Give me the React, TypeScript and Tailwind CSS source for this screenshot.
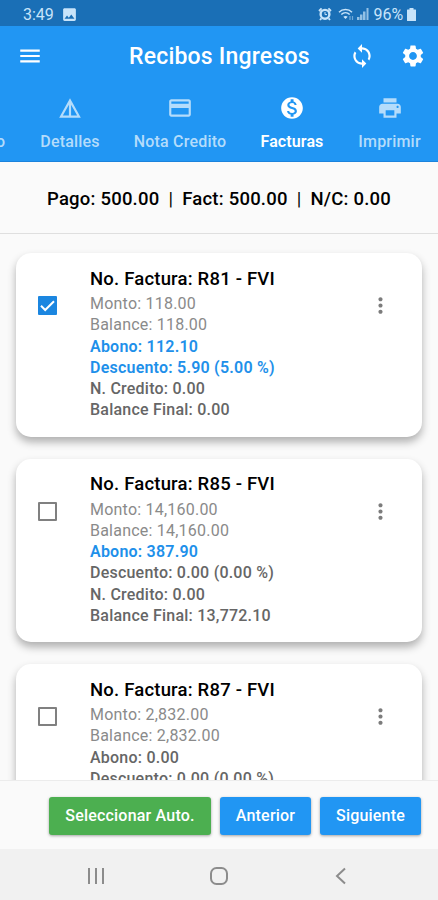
import { useState } from "react";
import type { ReactNode } from "react";
import {
  MdDetails,
  MdImage,
  MdMenu,
  MdMonetizationOn,
  MdMoreVert,
  MdOutlineCreditCard,
  MdPrint,
  MdSettings,
  MdSync,
} from "react-icons/md";

type Factura = {
  id: string;
  monto: string;
  balance: string;
  abono: string;
  descuento: string;
  credito?: string;
  final?: string;
  abonado: boolean;
  conDescuento: boolean;
};

const FACTURAS: Factura[] = [
  {
    id: "R81",
    monto: "118.00",
    balance: "118.00",
    abono: "112.10",
    descuento: "5.90 (5.00 %)",
    credito: "0.00",
    final: "0.00",
    abonado: true,
    conDescuento: true,
  },
  {
    id: "R85",
    monto: "14,160.00",
    balance: "14,160.00",
    abono: "387.90",
    descuento: "0.00 (0.00 %)",
    credito: "0.00",
    final: "13,772.10",
    abonado: true,
    conDescuento: false,
  },
  {
    id: "R87",
    monto: "2,832.00",
    balance: "2,832.00",
    abono: "0.00",
    descuento: "0.00 (0.00 %)",
    abonado: false,
    conDescuento: false,
  },
];

function StatusBar() {
  return (
    <div className="flex h-[26px] shrink-0 items-center bg-[#1a6fb6] pt-[2px] pl-[23px] pr-[22px] text-[#c8e4fa]">
      <span className="pt-[1px] text-[16px] leading-none">3:49</span>
      <MdImage className="ml-[7px] size-[17px]" />
      <div className="ml-auto flex items-center">
        {/* alarma */}
        <svg className="size-[14px]" viewBox="0 0 14 14" fill="none" stroke="currentColor">
          <circle cx="7" cy="7.3" r="4.4" strokeWidth="2.4" />
          <path d="M1 4 3.6 1.4M13 4 10.4 1.4M3.4 11.4 2 13M10.6 11.4 12 13" strokeWidth="1.8" />
          <path d="M7 5v2.6h2" strokeWidth="1" />
        </svg>
        {/* wifi */}
        <svg className="ml-[6px] h-[13px] w-[17px]" viewBox="0 0 17 13" fill="none" stroke="currentColor">
          <path d="M1 4.2C4.5.6 10.5.6 14 4.2" strokeWidth="1.5" />
          <path d="M3.3 6.5c2.4-2.2 6-2.2 8.4 0" strokeWidth="1.5" />
          <path d="M5.3 8.7 7.5 11l2.2-2.3c-1.3-1-3.1-1-4.4 0Z" fill="currentColor" stroke="none" />
          <path d="M12 8v4M14.5 8v4" strokeWidth="1.2" opacity="0.5" />
        </svg>
        {/* cobertura */}
        <svg className="ml-[2px] h-[12px] w-[12px]" viewBox="0 0 12 12" fill="currentColor">
          <path d="M0 9h2.5v3H0zM3 6.5h2.5V12H3zM6 3.5h2.5V12H6zM9.5 0h2v12h-2z" opacity="0.7" />
        </svg>
        <span className="ml-[5px] pt-[1px] text-[16px] leading-none tracking-[-0.1px]">96%</span>
        <svg className="ml-[4px] h-[13px] w-[9px]" viewBox="0 0 9 13" fill="currentColor">
          <path d="M2.5 0h4v1.5h2a.5.5 0 0 1 .5.5v10.5a.5.5 0 0 1-.5.5h-8a.5.5 0 0 1-.5-.5V2a.5.5 0 0 1 .5-.5h2z" />
        </svg>
      </div>
    </div>
  );
}

function AppBar() {
  return (
    <header className="flex h-[60px] shrink-0 items-center bg-[#2196f3] pl-[17px] pr-[12px] text-white">
      <MdMenu className="size-[26px]" />
      <h1 className="ml-[86px] text-[23px] font-medium leading-none tracking-[0.2px] whitespace-nowrap">
        Recibos Ingresos
      </h1>
      <MdSync className="ml-auto size-[26px]" />
      <MdSettings className="ml-[25px] size-[26px]" />
    </header>
  );
}

function Tab({ icon, label, className, active }: { icon: ReactNode; label: string; className: string; active?: boolean }) {
  return (
    <div
      className={`flex shrink-0 flex-col items-center pt-[9px] text-[26px] ${className} ${
        active ? "text-white" : "text-[#b4dcfb]"
      }`}
    >
      {icon}
      <span
        className={`mt-[12px] text-[16px] leading-[18px] whitespace-nowrap ${
          active ? "font-semibold tracking-[0.1px]" : "font-medium tracking-[0.2px]"
        }`}
      >
        {label}
      </span>
    </div>
  );
}

function Tabs() {
  return (
    <nav className="flex h-[76px] shrink-0 overflow-hidden border-b border-[#1b83dc] bg-[#2196f3]">
      <div className="flex w-[23px] shrink-0 items-start pt-[47px] text-[16px] font-medium leading-[18px] text-[#b4dcfb]">
        <span className="-ml-[4px]">o</span>
      </div>
      <Tab icon={<MdDetails />} label="Detalles" className="w-[94px]" />
      <Tab icon={<MdOutlineCreditCard />} label="Nota Credito" className="w-[126px]" />
      <Tab icon={<MdMonetizationOn />} label="Facturas" className="w-[98px]" active />
      <Tab icon={<MdPrint />} label="Imprimir" className="w-[97px]" />
    </nav>
  );
}

function Check({ checked, onClick }: { checked: boolean; onClick: () => void }) {
  return (
    <button
      onClick={onClick}
      aria-label="Seleccionar factura"
      className={`mt-[43px] ml-[22px] flex size-[19px] shrink-0 items-center justify-center rounded-[1px] ${
        checked ? "bg-[#1b86e0]" : "border-2 border-[#808080]"
      }`}
    >
      {checked && (
        <svg className="size-[19px]" viewBox="0 0 19 19" fill="none" stroke="#fff" strokeWidth="2">
          <path d="m3 9.8 4.2 4.2L16 5.2" />
        </svg>
      )}
    </button>
  );
}

function FacturaCard({ factura }: { factura: Factura }) {
  const [checked, setChecked] = useState(factura.conDescuento);

  return (
    <article className="flex h-[183.5px] shrink-0 rounded-[15px] bg-white shadow-[0_5px_9px_rgba(0,0,0,0.3)]">
      <Check checked={checked} onClick={() => setChecked(!checked)} />
      <div className="ml-[33px] flex-1 pt-[14.5px] text-[16px] leading-[21.3px] tracking-[0.22px] whitespace-nowrap text-[#666666]">
        <h2 className="mb-[3.5px] text-[18.5px] font-medium leading-[22px] tracking-[0.2px] text-black">
          No. Factura: {factura.id} - FVI
        </h2>
        <p className="text-[#8a8a8a]">Monto: {factura.monto}</p>
        <p className="text-[#8a8a8a]">Balance: {factura.balance}</p>
        <p className={factura.abonado ? "font-semibold text-[#1e90ea]" : "font-medium"}>Abono: {factura.abono}</p>
        <p className={factura.conDescuento ? "font-semibold text-[#1e90ea]" : "font-medium"}>
          Descuento: {factura.descuento}
        </p>
        {factura.credito && <p className="font-medium">N. Credito: {factura.credito}</p>}
        {factura.final && <p className="font-medium">Balance Final: {factura.final}</p>}
      </div>
      <MdMoreVert className="mt-[40px] mr-[29px] size-[25px] text-[#7c7c7c]" />
    </article>
  );
}

function Boton({ children, className }: { children: ReactNode; className: string }) {
  return (
    <button
      className={`h-[38px] rounded-[3px] text-[16px] font-medium tracking-[0.2px] text-white shadow-[0_1px_3px_rgba(0,0,0,0.35)] whitespace-nowrap ${className}`}
    >
      {children}
    </button>
  );
}

export default function App() {
  return (
    <div className="flex h-screen w-full flex-col overflow-hidden bg-[#fafafa] font-[Roboto,'Liberation_Sans',sans-serif]">
      <StatusBar />
      <AppBar />
      <Tabs />

      {/* resumen del pago */}
      <div className="flex h-[72px] shrink-0 items-center justify-center gap-[9px] border-b border-[#dfdfdf] pt-[4px] text-[18.5px] font-medium tracking-[0.22px] whitespace-nowrap text-black">
        <span>Pago: 500.00</span>
        <span className="font-normal">|</span>
        <span>Fact: 500.00</span>
        <span className="font-normal">|</span>
        <span>N/C: 0.00</span>
      </div>

      <main className="flex min-h-0 flex-1 flex-col gap-[22px] overflow-hidden px-[16px] pt-[19px]">
        {FACTURAS.map((factura) => (
          <FacturaCard key={factura.id} factura={factura} />
        ))}
      </main>

      <footer className="flex h-[69px] shrink-0 items-start justify-end gap-[9px] border-t border-[#ececec] bg-[#fafafa] pt-[16px] pr-[17px]">
        <Boton className="w-[162px] bg-[#4caf50]">Seleccionar Auto.</Boton>
        <Boton className="w-[91px] bg-[#2196f3]">Anterior</Boton>
        <Boton className="w-[101px] bg-[#2196f3]">Siguiente</Boton>
      </footer>

      {/* barra de navegación del sistema */}
      <div className="flex h-[51px] shrink-0 items-center bg-[#f1f1f1] pt-[2px] pl-[87px] text-[#8c8c8c]">
        <svg className="h-[18px] w-[18px]" viewBox="0 0 18 18" stroke="currentColor" strokeWidth="2">
          <path d="M2 1v16M9 1v16M16 1v16" />
        </svg>
        <svg className="ml-[104px] h-[20px] w-[20px]" viewBox="0 0 20 20" fill="none" stroke="currentColor" strokeWidth="2">
          <rect x="2" y="2" width="16" height="16" rx="5.5" />
        </svg>
        <svg className="ml-[106px] h-[18px] w-[11px]" viewBox="0 0 11 18" fill="none" stroke="currentColor" strokeWidth="2">
          <path d="m10 1.5-8 7.5 8 7.5" />
        </svg>
      </div>
    </div>
  );
}
